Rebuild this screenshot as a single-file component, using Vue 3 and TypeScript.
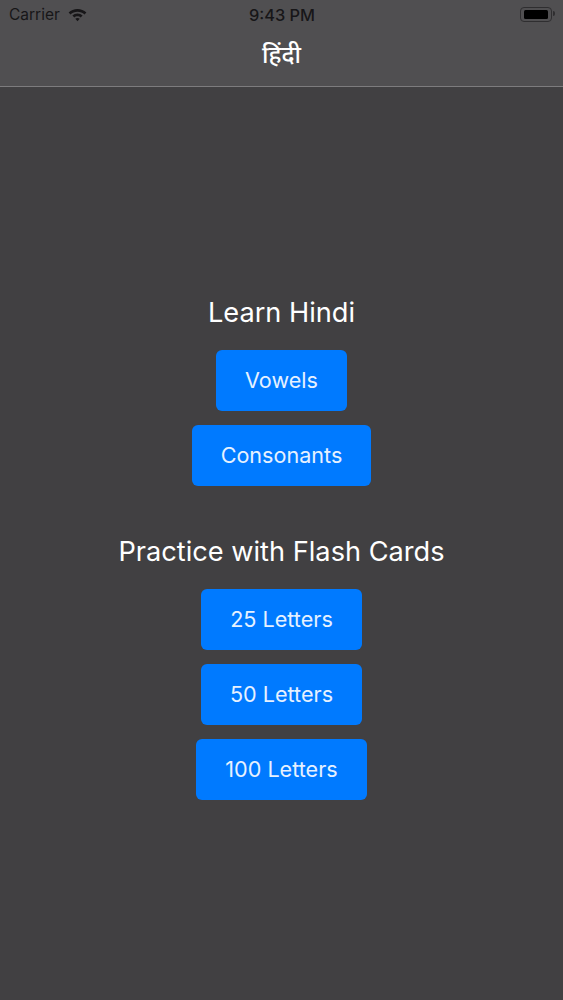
<script setup lang="ts">
const sections: { title: string; items: string[] }[] = [
  { title: 'Learn Hindi', items: ['Vowels', 'Consonants'] },
  { title: 'Practice with Flash Cards', items: ['25 Letters', '50 Letters', '100 Letters'] },
]
</script>

<template>
  <div class="screen">
    <header class="nav">
      <div class="status">
        <div class="status-left">
          <span>Carrier</span>
          <svg class="wifi" width="19" height="14" viewBox="0 0 19 14">
            <path d="M9.5 1C6 1 3 2.3.6 4.5l1.9 2C4.4 4.8 6.8 3.8 9.5 3.8s5.100 1 7 2.700l1.900-2C16 2.300 13 1 9.500 1z" />
            <path d="M9.500 5.500c-2 0-3.800.8-5.100 2l1.900 2c.8-.8 2-1.300 3.200-1.300s2.400.5 3.200 1.300l1.900-2c-1.300-1.200-3.100-2-5.100-2z" />
            <path d="M9.500 10c-.9 0-1.600.3-2.200.8l2.200 2.400 2.200-2.400c-.6-.5-1.300-.8-2.200-.8z" />
          </svg>
        </div>
        <span class="time">9:43 PM</span>
        <div class="battery"><i></i></div>
      </div>
      <h1 class="nav-title">हिंदी</h1>
    </header>
    <main class="content">
      <section v-for="s in sections" :key="s.title" class="section">
        <h2>{{ s.title }}</h2>
        <button v-for="b in s.items" :key="b" type="button">{{ b }}</button>
      </section>
    </main>
  </div>
</template>

<style>
body { margin: 0; background: #414042; }
</style>

<style scoped>
.screen {
  width: 563px;
  height: 1000px;
  overflow: hidden;
  background: #414042;
  color: #fff;
  font-family: Inter, "Noto Sans", sans-serif;
}
.nav {
  height: 86px;
  background: #504f51;
  border-bottom: 1px solid #7d7c7e;
}
.status {
  height: 29px;
  padding: 0 9px;
  display: flex;
  align-items: center;
  justify-content: space-between;
  position: relative;
  color: #171618;
  font-size: 15.500px;
}
.status-left {
  display: flex;
  align-items: center;
  gap: 8px;
}
.wifi { fill: #171618; }
.time {
  position: absolute;
  left: 1px;
  right: 0;
  text-align: center;
  font-size: 16.400px;
  font-weight: 500;
}
.battery {
  width: 32px;
  height: 15px;
  box-sizing: border-box;
  margin-right: 2px;
  padding: 2px 3px;
  border: 1px solid #2f2e30;
  border-radius: 4px;
  position: relative;
}
.battery::after {
  content: "";
  position: absolute;
  right: -4px;
  top: 3px;
  width: 2px;
  height: 5px;
  background: #2f2e30;
  border-radius: 0 2px 2px 0;
}
.battery i {
  display: block;
  height: 100%;
  background: #000;
  border-radius: 1.500px;
}
.nav-title {
  margin: 0;
  height: 57px;
  display: flex;
  align-items: center;
  justify-content: center;
  padding-bottom: 8px;
  box-sizing: border-box;
  font-size: 24px;
  font-weight: 500;
  font-family: "Noto Sans", "Noto Sans Devanagari", sans-serif;
}
.content {
  padding-top: 208px;
  display: flex;
  flex-direction: column;
  align-items: center;
  gap: 48px;
}
.section {
  display: flex;
  flex-direction: column;
  align-items: center;
  gap: 14px;
}
h2 {
  margin: 0 0 5px;
  height: 36px;
  line-height: 36px;
  font-size: 27.200px;
  font-weight: 375;
}
button {
  height: 61px;
  padding: 0 29px 1px;
  border: 0;
  border-radius: 6px;
  background: #007aff;
  color: #e6f1ff;
  font: 375 21.600px Inter, "Noto Sans", sans-serif;
}
</style>
